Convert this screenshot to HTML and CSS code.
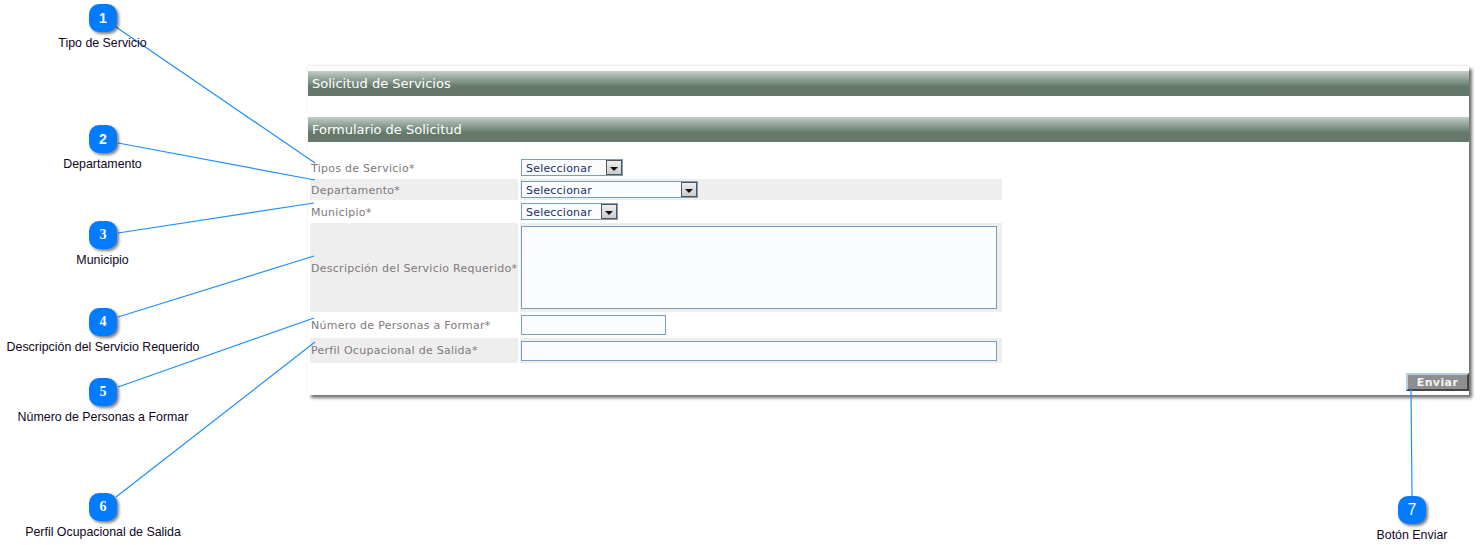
FILE: index.html
```html
<!DOCTYPE html>
<html lang="es">
<head>
<meta charset="utf-8">
<title>Solicitud de Servicios</title>
<link rel="stylesheet" href="styles.css">
</head>
<body>
<main class="canvas">
  <section class="panel">
    <h1 class="bar">Solicitud de Servicios</h1>
    <h2 class="bar bar-second">Formulario de Solicitud</h2>
    <form class="form">
      <div class="label h21 low">Tipos de Servicio*</div>
      <div class="field h21 plain"><div class="select w102"><span>Seleccionar</span><i class="arrow"><svg width="8" height="4" viewBox="0 0 8 4"><path d="M0 0h8L4 4z"/></svg></i></div></div>
      <div class="label alt h21 low">Departamento*</div>
      <div class="field alt h21"><div class="select w177"><span>Seleccionar</span><i class="arrow"><svg width="8" height="4" viewBox="0 0 8 4"><path d="M0 0h8L4 4z"/></svg></i></div></div>
      <div class="label h21 low">Municipio*</div>
      <div class="field h21 plain"><div class="select w97"><span>Seleccionar</span><i class="arrow"><svg width="8" height="4" viewBox="0 0 8 4"><path d="M0 0h8L4 4z"/></svg></i></div></div>
      <div class="label alt h89 low">Descripción del Servicio Requerido*</div>
      <div class="field alt h89"><textarea class="box area"></textarea></div>
      <div class="label h24">Número de Personas a Formar*</div>
      <div class="field h24 plain"><input class="box short" type="text"></div>
      <div class="label alt h25">Perfil Ocupacional de Salida*</div>
      <div class="field alt h25"><input class="box long" type="text"></div>
    </form>
    <div class="actions"><button class="send" type="button">Enviar</button></div>
  </section>

  <svg class="leaders" width="1483" height="545" viewBox="0 0 1483 545">
    <path d="M116 27L315 163M118 143L315 180M118 233L314 203M118 317L314 256M118 387L314 318M116 497L315 342M1412 496L1411 388"/>
  </svg>

  <div class="callout c1"><b class="badge">1</b><span>Tipo de Servicio</span></div>
  <div class="callout c2"><b class="badge">2</b><span>Departamento</span></div>
  <div class="callout c3"><b class="badge serif">3</b><span>Municipio</span></div>
  <div class="callout c4"><b class="badge serif">4</b><span>Descripción del Servicio Requerido</span></div>
  <div class="callout c5"><b class="badge serif">5</b><span>Número de Personas a Formar</span></div>
  <div class="callout c6"><b class="badge serif">6</b><span>Perfil Ocupacional de Salida</span></div>
  <div class="callout c7"><b class="badge light">7</b><span>Botón Enviar</span></div>
</main>
</body>
</html>
```
FILE: styles.css
```css
* { box-sizing: border-box; }
html, body { margin: 0; padding: 0; background: #fff; overflow: hidden; }
.canvas { position: relative; width: 1483px; height: 545px; }

.panel {
  position: absolute; left: 308px; top: 66px; width: 1161px; height: 329px;
  padding-top: 5px; background: #fff;
  box-shadow: 0 -1px 2px rgba(0,0,0,.1), 3px 3px 3px rgba(0,0,0,.55);
}
.bar {
  margin: 0; height: 25px; padding: 0 4px;
  font: normal 13px/25px "DejaVu Sans", sans-serif; color: #fff;
  background: linear-gradient(#c3cdc6 0, #93a59a 30%, #667a6c 62%, #64776a 100%);
}
.bar-second { margin-top: 21px; }

.form {
  display: grid; grid-template-columns: 208px 482px; column-gap: 2px; row-gap: 1px;
  margin: 15px 0 0 2px;
  font: 11px "DejaVu Sans", sans-serif; color: #80787c;
}
.label { display: flex; align-items: center; padding-left: 1px; white-space: nowrap; letter-spacing: .27px; }
.low { padding-top: 2px; }
.field { display: flex; align-items: center; padding-left: 1px; }
.alt { background: #eee; }
.h21 { height: 21px; } .h89 { height: 89px; } .h24 { height: 24px; } .h25 { height: 25px; }

.select {
  display: flex; justify-content: space-between; align-items: center; height: 17px;
  border: 1px solid #7a9cbd; background: #fafcff; padding-left: 4px;
  color: #1c2f66; font-size: 11px; letter-spacing: .2px;
}
.select span { padding-top: 2px; }
.w102 { width: 102px; } .w177 { width: 177px; } .w97 { width: 97px; }
.arrow {
  display: flex; align-items: center; justify-content: center; width: 16px; height: 15px;
  border: 1px solid #555; background: linear-gradient(#eee, #ccc);
}
.arrow svg { margin-top: 3px; }
.arrow path { fill: #111; }

.box {
  display: block; margin: 0; padding: 0; border: 1px solid #7a9cbd; border-radius: 0;
  background: #fafcff; outline: none; resize: none;
}
.area { width: 476px; height: 83px; }
.short { width: 145px; height: 20px; }
.long { width: 476px; height: 20px; }

.actions { display: flex; justify-content: flex-end; margin-top: 10px; }
.send {
  width: 63px; height: 18px; padding: 0; border: 2px solid; border-color: #b4d0e4 #444 #444 #b4d0e4;
  background: #8e8e8e; color: #f4f4f4;
  font: bold 11px "DejaVu Sans", sans-serif; letter-spacing: .4px;
}

.leaders { position: absolute; left: 0; top: 0; pointer-events: none; }
.leaders path { fill: none; stroke: #1e8fff; stroke-width: 1.2; }

.callout {
  position: absolute; width: 260px; margin-left: -130px;
  display: flex; flex-direction: column; align-items: center;
  font: 12.4px/14px "Liberation Sans", Arial, sans-serif; color: #10061e;
}
.callout span { margin-top: 4px; white-space: nowrap; }
.c1 { left: 103px; top: 4px; }
.c2 { left: 103px; top: 125px; }
.c3 { left: 103px; top: 221px; }
.c4 { left: 103px; top: 308px; }
.c5 { left: 103px; top: 378px; }
.c6 { left: 103px; top: 493px; }
.c7 { left: 1412px; top: 496px; }
.c1 span, .c2 span, .c3 span { margin-left: -1px; }
.badge {
  display: flex; align-items: center; justify-content: center; width: 28px; height: 28px;
  border-radius: 10px; background: #027bff; color: #fff;
  box-shadow: 2px 2px 3px rgba(0,0,0,.5);
  font: bold 14px "Liberation Sans", Arial, sans-serif;
}
.serif { font-family: "Liberation Serif", "Times New Roman", serif; }
.light { font-weight: normal; font-size: 16px; }
```
